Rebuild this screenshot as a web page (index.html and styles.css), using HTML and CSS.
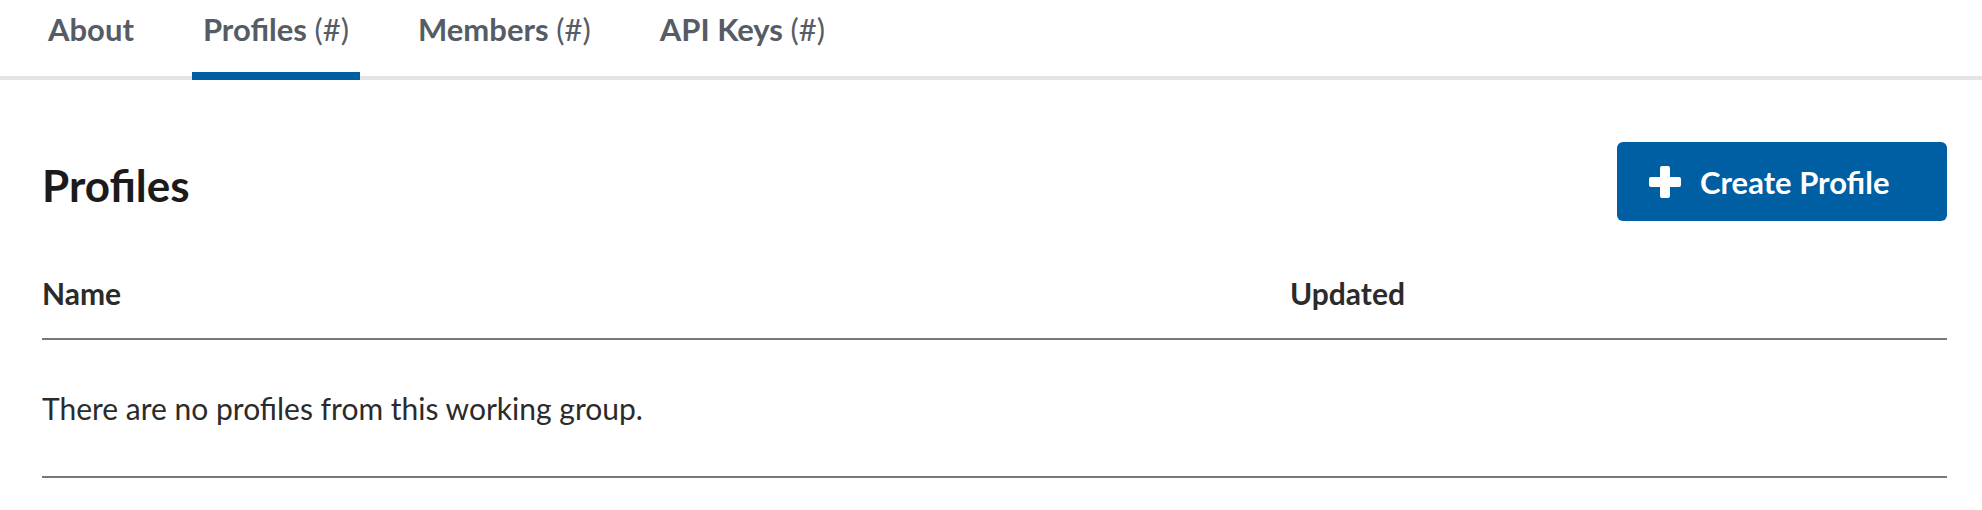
FILE: index.html
```html
<!DOCTYPE html>
<html lang="en">
<head>
    <meta charset="UTF-8">
    <meta name="viewport" content="width=device-width, initial-scale=1.0">
    <title>Working Group - Profiles</title>
    <link rel="stylesheet" href="styles.css">
</head>
<body>
    <nav class="tabs">
        <a class="tab" href="#about">About</a>
        <a class="tab active" href="#profiles">Profiles <span class="count">(#)</span></a>
        <a class="tab" href="#members">Members <span class="count">(#)</span></a>
        <a class="tab" href="#keys">API Keys <span class="count">(#)</span></a>
    </nav>

    <main class="content">
        <div class="section-head">
            <h1>Profiles</h1>
            <button class="btn-primary" type="button">
                <svg class="icon-plus" viewBox="0 0 32 32" width="32" height="32" aria-hidden="true">
                    <rect x="11" y="0" width="10" height="32" rx="2"/>
                    <rect x="0" y="11" width="32" height="10" rx="2"/>
                </svg>
                <span>Create Profile</span>
            </button>
        </div>

        <table class="data-table">
            <thead>
                <tr>
                    <th class="col-name">Name</th>
                    <th>Updated</th>
                </tr>
            </thead>
            <tbody>
                <tr>
                    <td colspan="2">There are no profiles from this working group.</td>
                </tr>
            </tbody>
        </table>
    </main>
</body>
</html>
```

FILE: styles.css
```css
body {
    font-family: 'Lato', 'Noto Sans', sans-serif;
    margin: 0;
    padding: 0;
    background-color: #fff;
    color: #1b1b1b;
}

/* Tabs */
.tabs {
    display: flex;
    gap: 47px;
    padding-left: 37px;
    border-bottom: 4px solid #e3e4e5;
}

.tab {
    display: block;
    padding: 11px 11px 25px;
    margin-bottom: -4px;
    border-bottom: 8px solid transparent;
    font-size: 31px;
    line-height: 36px;
    font-weight: bold;
    color: #565c65;
    text-decoration: none;
}

.tab .count {
    font-weight: normal;
}

.tab.active {
    border-bottom-color: #005ea2;
}

/* Main */
.content {
    padding: 0 35px 0 42px;
}

.section-head {
    display: flex;
    justify-content: space-between;
    align-items: center;
    margin-top: 62px;
}

.section-head h1 {
    margin: 6px 0 0;
    font-size: 44px;
    line-height: 48px;
    font-weight: bold;
    color: #1b1b1b;
}

.btn-primary {
    display: flex;
    align-items: center;
    gap: 19px;
    width: 330px;
    height: 79px;
    padding: 0 0 0 32px;
    border: none;
    border-radius: 6px;
    background-color: #005ea2;
    color: #fff;
    font-family: inherit;
    font-size: 31px;
    font-weight: bold;
    cursor: pointer;
}

.icon-plus {
    fill: #fff;
}

/* Table */
.data-table {
    width: 100%;
    margin-top: 33px;
    border-collapse: collapse;
    color: #2b2b2b;
}

.data-table th {
    text-align: left;
    padding: 21px 0 27px;
    font-size: 30px;
    line-height: 36px;
    font-weight: bold;
    border-bottom: 2px solid #787878;
}

.data-table th.col-name {
    width: 1248px;
}

.data-table td {
    padding: 50px 0;
    font-size: 30px;
    line-height: 36px;
    border-bottom: 2px solid #787878;
}
```
